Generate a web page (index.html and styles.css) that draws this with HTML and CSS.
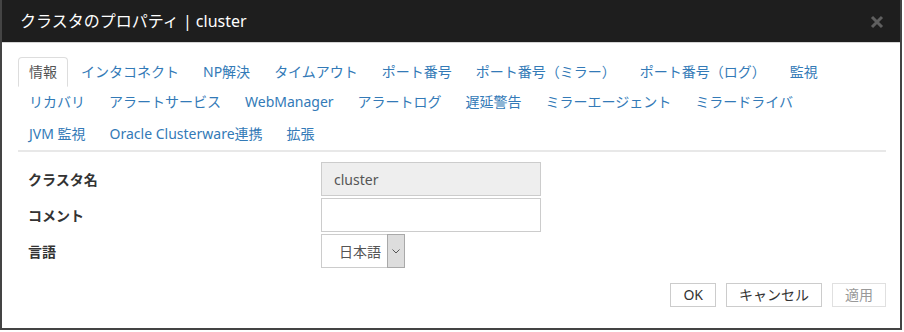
FILE: index.html
```html
<!DOCTYPE html>
<html lang="ja">
<head>
    <meta charset="UTF-8">
    <meta name="viewport" content="width=device-width, initial-scale=1.0">
    <title>クラスタのプロパティ</title>
    <link rel="stylesheet" href="styles.css">
</head>
<body>
    <div class="dialog">
        <div class="dialog-header">
            <h4 class="dialog-title">クラスタのプロパティ | cluster</h4>
            <button class="close" type="button">
                <svg width="14" height="14" viewBox="0 0 14 14">
                    <path d="M2 2 L12 12 M12 2 L2 12" stroke="#5f5f5f" stroke-width="3" fill="none"/>
                </svg>
            </button>
        </div>

        <div class="dialog-body">
            <ul class="nav-tabs">
                <li class="active"><a>情報</a></li>
                <li><a>インタコネクト</a></li>
                <li><a>NP解決</a></li>
                <li><a>タイムアウト</a></li>
                <li><a>ポート番号</a></li>
                <li><a>ポート番号（ミラー）</a></li>
                <li><a>ポート番号（ログ）</a></li>
                <li><a>監視</a></li>
                <li><a>リカバリ</a></li>
                <li><a>アラートサービス</a></li>
                <li><a>WebManager</a></li>
                <li><a>アラートログ</a></li>
                <li><a>遅延警告</a></li>
                <li><a>ミラーエージェント</a></li>
                <li><a>ミラードライバ</a></li>
                <li><a>JVM 監視</a></li>
                <li><a>Oracle Clusterware連携</a></li>
                <li><a>拡張</a></li>
            </ul>

            <div class="form">
                <label for="clusterName">クラスタ名</label>
                <input type="text" id="clusterName" class="input" value="cluster" disabled>

                <label for="comment">コメント</label>
                <input type="text" id="comment" class="input">

                <label>言語</label>
                <div class="select">
                    <span class="select-value">日本語</span>
                    <span class="select-arrow">
                        <svg width="8" height="5" viewBox="0 0 8 5">
                            <path d="M0.5 0.5 L4 4 L7.5 0.5" stroke="#555" stroke-width="1" fill="none"/>
                        </svg>
                    </span>
                </div>
            </div>
        </div>

        <div class="dialog-footer">
            <button class="btn" type="button">OK</button>
            <button class="btn" type="button">キャンセル</button>
            <button class="btn" type="button" disabled>適用</button>
        </div>
    </div>
</body>
</html>
```

FILE: styles.css
```css
body {
    margin: 0;
    background-color: #fff;
    font-family: "Noto Sans", "Noto Sans CJK JP", sans-serif;
    font-size: 14px;
    color: #333;
}

.dialog {
    width: 898px;
    border: 2px solid #444;
    border-top: none;
    background-color: #fff;
}

.dialog-header {
    height: 42px;
    padding: 0 16px 0 18px;
    background-color: #1e1e1e;
    border-bottom: 1px solid #d5d5d5;
    display: flex;
    align-items: center;
    justify-content: space-between;
}

.dialog-title {
    margin: 0;
    font-size: 16px;
    font-weight: normal;
    line-height: 20px;
    color: #fff;
}

.close {
    padding: 0;
    border: none;
    background: none;
    display: flex;
    margin-top: 1px;
}

.dialog-body {
    padding: 14px 14px 0 16px;
}

.nav-tabs {
    list-style: none;
    margin: 0;
    padding: 0 0 1px 0;
    display: flex;
    flex-wrap: wrap;
    border-bottom: 2px solid #e8e8e8;
}

.nav-tabs li {
    margin-right: 2px;
}

.nav-tabs li:nth-child(n+16) {
    margin-top: 2px;
}

.nav-tabs a {
    display: block;
    padding: 4px 10px;
    line-height: 20px;
    color: #337ab7;
    border: 1px solid transparent;
    border-radius: 4px 4px 0 0;
}

.nav-tabs .active a {
    color: #555;
    border-color: #ddd #ddd transparent;
}

.form {
    margin-top: 10px;
    padding-left: 10px;
    display: grid;
    grid-template-columns: 293px 220px;
    grid-auto-rows: 34px;
    row-gap: 2px;
    align-items: center;
}

.form label {
    font-weight: bold;
    color: #333;
}

.input {
    box-sizing: border-box;
    height: 34px;
    width: 220px;
    padding: 0 12px;
    border: 1px solid #ccc;
    font-family: inherit;
    font-size: 14px;
    color: #555;
    background-color: #fff;
}

.input:disabled {
    background-color: #eee;
}

.select {
    box-sizing: border-box;
    width: 84px;
    height: 34px;
    border: 1px solid #ccc;
    display: flex;
}

.select-value {
    flex: 1;
    display: flex;
    align-items: center;
    justify-content: flex-end;
    padding-right: 6px;
    color: #555;
}

.select-arrow {
    width: 16px;
    background-color: #ddd;
    border: 1px solid #a9a9a9;
    margin: -1px -1px -1px 0;
    display: flex;
    align-items: center;
    justify-content: center;
}

.dialog-footer {
    padding: 15px 14px 21px;
    display: flex;
    justify-content: flex-end;
    gap: 10px;
}

.btn {
    height: 24px;
    padding: 0 12px;
    border: 1px solid #ccc;
    background-color: #fff;
    font-family: inherit;
    font-size: 14px;
    color: #333;
    line-height: 22px;
}

.btn:disabled {
    color: #999;
    border-color: #e0e0e0;
}
```
